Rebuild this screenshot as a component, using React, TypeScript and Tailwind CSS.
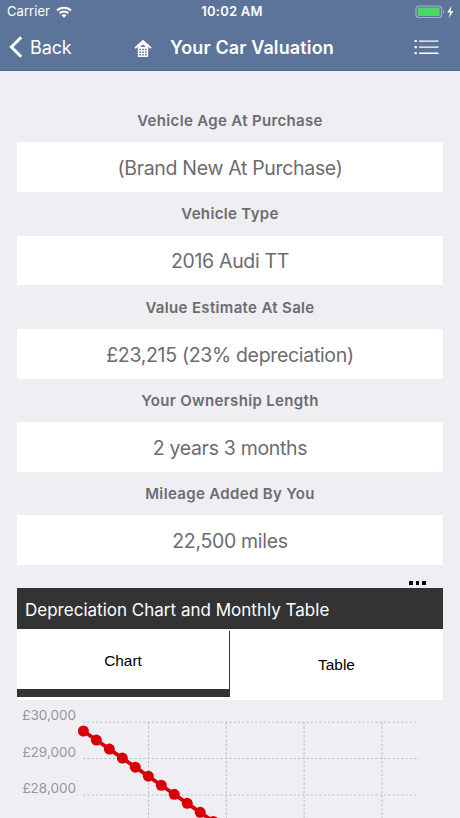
const fields = [
  { label: 'Vehicle Age At Purchase', value: '(Brand New At Purchase)' },
  { label: 'Vehicle Type', value: '2016 Audi TT' },
  { label: 'Value Estimate At Sale', value: '£23,215 (23% depreciation)' },
  { label: 'Your Ownership Length', value: '2 years 3 months' },
  { label: 'Mileage Added By You', value: '22,500 miles' },
];

const points = Array.from({ length: 13 }, (_, i) => ({ x: 83.4 + i * 12.98, y: 31 + i * 9.04 }));

function StatusBar() {
  return (
    <div className="flex h-6 items-center justify-between pl-[7px] pr-[5px]">
      <div className="flex w-[150px] items-center gap-[6px]">
        <span className="text-[13px] tracking-[0.05px]">Carrier</span>
        <svg width="16" height="12" viewBox="0 0 16 12" fill="none" stroke="white" strokeWidth="2.1">
          <path d="M1 4.6C4.8.7 11.2.7 15 4.6" />
          <path d="M3.5 7.3c2.5-2.5 6.5-2.5 9 0" />
          <path d="M8 11.7 5.6 9.2c1.3-1.2 3.5-1.2 4.8 0Z" fill="white" stroke="none" />
        </svg>
      </div>
      <span className="pl-[2px] text-[13px] font-semibold tracking-[0.22px]">10:02 AM</span>
      <div className="flex w-[150px] items-center justify-end">
        <svg width="40" height="14" viewBox="0 0 40 14">
          <rect x="1" y="1" width="25.5" height="11.5" rx="2.7" fill="none" stroke="#a4b1c8" strokeWidth="1.1" />
          <rect x="2.7" y="2.6" width="22" height="8.4" rx="1.2" fill="#4bd965" />
          <path d="M28 4.7c1.7.7 1.7 3.4 0 4.1Z" fill="#a4b1c8" />
          <path d="m36.5 1-4.3 6.5h2.8L33.8 13l4.6-6.8h-2.8Z" fill="white" />
        </svg>
      </div>
    </div>
  );
}

function NavBar() {
  return (
    <div className="flex h-[46px] items-center pl-[9px]">
      <svg className="shrink-0" width="14" height="22" viewBox="0 0 14 22" fill="none" stroke="white" strokeWidth="3">
        <path d="M12.2 1.2 2.4 11l9.8 9.8" />
      </svg>
      <span className="ml-[7px] w-[104px] text-[18px] tracking-[-0.1px]">Back</span>
      <svg className="mt-[3px] shrink-0" width="18" height="19" viewBox="0 0 18 19">
        <path d="M1 9.2 9 2l8 7.2" fill="none" stroke="white" strokeWidth="1.8" />
        <path d="M9 2.2 3.8 7v11h10.4V7Z" fill="white" />
        <path d="M6.1 8.1 9 5.4l2.9 2.7Z" fill="#5c7499" />
        <path d="M5.4 10.5h7.2M5.4 13.2h7.2M5.4 15.8h7.2" stroke="#5c7499" strokeWidth="1.5" strokeDasharray="1.7 1.05" />
      </svg>
      <h1 className="ml-[18px] w-[244px] whitespace-nowrap text-[18px] font-semibold tracking-[0.13px]">Your Car Valuation</h1>
      <svg className="shrink-0" width="26" height="16" viewBox="0 0 26 16" fill="white">
        <path d="M.6.9h2.2v2.2H.6zM.6 7h2.2v2.2H.6zM.6 13.1h2.2v2.2H.6z" />
        <path d="M5 1.4h19.5v1.3H5zM5 7.5h19.5v1.3H5zM5 13.6h19.5v1.3H5z" />
      </svg>
    </div>
  );
}

function DepreciationChart() {
  return (
    <div className="h-[118px] overflow-hidden">
      <svg width="460" height="118" viewBox="0 0 460 118">
        <g stroke="#bebec4" strokeWidth="1.1" strokeDasharray="2.2 2.1">
          {[22.3, 58.5, 95].map((y) => (
            <line key={y} x1="83" x2="419" y1={y} y2={y} />
          ))}
          {[148.5, 226.3, 304.1, 382].map((x) => (
            <line key={x} x1={x} x2={x} y1="22.3" y2="118" />
          ))}
        </g>
        <polyline points={points.map((p) => p.x + ',' + p.y).join(' ')} fill="none" stroke="#d70206" strokeWidth="3.8" />
        {points.map((p) => (
          <circle key={p.x} cx={p.x} cy={p.y} r="5.5" fill="#d70206" />
        ))}
        <g fill="#97979b" fontSize="13.5" textAnchor="end">
          <text x="76" y="20.3">£30,000</text>
          <text x="76" y="56.8">£29,000</text>
          <text x="76" y="93.3">£28,000</text>
        </g>
      </svg>
    </div>
  );
}

export default function App() {
  return (
    <div className="h-[818px] w-[460px] overflow-hidden bg-[#efeef3] font-['Inter',sans-serif]">
      <header className="h-[71px] border-b border-[#536a91] bg-[#5c7499] text-white">
        <StatusBar />
        <NavBar />
      </header>
      <main>
        <div className="px-[17px] pt-[27.7px]">
          {fields.map((f) => (
            <section key={f.label} className="text-center text-[#6c6c70]">
              <h2 className="flex h-[43.6px] items-center justify-center pt-[1.5px] text-[15px] font-semibold tracking-[0.34px]">{f.label}</h2>
              <p className="flex h-[49.7px] items-center justify-center bg-white pt-[3px] text-[19.5px] tracking-[-0.32px]">{f.value}</p>
            </section>
          ))}
          <div className="flex h-[22.8px] justify-end gap-[3px] pr-[17.5px] pt-[16px]">
            <i className="size-[3.5px] bg-black" />
            <i className="size-[3.5px] bg-black" />
            <i className="size-[3.5px] bg-black" />
          </div>
          <h2 className="flex h-[41px] items-center bg-[#333] pl-2 pt-[4px] text-[17px] tracking-[0.01px] text-white">Depreciation Chart and Monthly Table</h2>
          <div className="flex h-[71px] bg-white pt-[2px] font-['Liberation_Sans',sans-serif] text-[15.4px] text-black">
            <div className="flex h-[66.5px] w-[213px] items-center justify-center border-b-[8.5px] border-r border-[#333]">Chart</div>
            <div className="flex h-[66px] flex-1 items-center justify-center pt-[2px]">Table</div>
          </div>
        </div>
        <DepreciationChart />
      </main>
    </div>
  );
}
